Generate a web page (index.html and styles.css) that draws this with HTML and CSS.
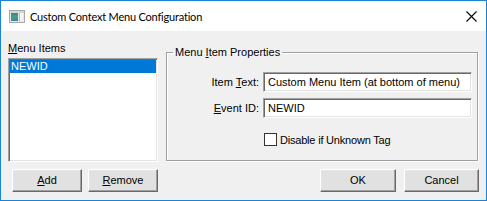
FILE: index.html
```html
<!DOCTYPE html>
<html>
<head>
<meta charset="utf-8">
<link rel="stylesheet" href="styles.css">
</head>
<body>
<div class="window">
  <div class="titlebar">
    <svg class="app-icon" width="16" height="13" viewBox="0 0 16 13">
      <rect x="0.5" y="0.5" width="15" height="12" fill="#e8e8e8" stroke="#a8a8a8"/>
      <rect x="1" y="1" width="14" height="2" fill="#d4d4d4"/>
      <defs>
        <linearGradient id="g" x1="0" y1="0" x2="0" y2="1">
          <stop offset="0" stop-color="#2c8c8c"/>
          <stop offset="0.5" stop-color="#4aa07a"/>
          <stop offset="1" stop-color="#3a7fb0"/>
        </linearGradient>
      </defs>
      <rect x="2" y="3" width="7" height="8" fill="url(#g)"/>
      <rect x="10" y="3" width="4" height="8" fill="#f4f4f4"/>
      <rect x="10" y="3" width="1" height="8" fill="#bcbcbc"/>
    </svg>
    <span class="title">Custom Context Menu Configuration</span>
    <svg class="close" width="11" height="11" viewBox="0 0 11 11">
      <path d="M0.5 0.5 L10.5 10.5 M10.5 0.5 L0.5 10.5" stroke="#000" stroke-width="1.1" fill="none"/>
    </svg>
  </div>
  <div class="body">
    <div class="main">
      <div class="left">
        <div class="label"><u>M</u>enu Items</div>
        <div class="listbox">
          <div class="list-item selected">NEWID</div>
        </div>
      </div>
      <fieldset class="group">
        <legend>Menu <u>I</u>tem Properties</legend>
        <div class="row">
          <span class="field-label">Item <u>T</u>ext:</span>
          <div class="textbox">Custom Menu Item (at bottom of menu)</div>
        </div>
        <div class="row">
          <span class="field-label"><u>E</u>vent ID:</span>
          <div class="textbox">NEWID</div>
        </div>
        <div class="check-row">
          <span class="checkbox"></span>
          <span class="check-label">Disable if Unknown Tag</span>
        </div>
      </fieldset>
    </div>
    <div class="buttons">
      <div class="btn-group">
        <div class="btn btn-add"><u>A</u>dd</div>
        <div class="btn btn-remove"><u>R</u>emove</div>
      </div>
      <div class="btn-group right">
        <div class="btn btn-ok">OK</div>
        <div class="btn btn-cancel">Cancel</div>
      </div>
    </div>
  </div>
</div>
</body>
</html>
```

FILE: styles.css
```css
html, body {
  margin: 0;
  padding: 0;
  background: #f0f0f0;
}

.window {
  width: 487px;
  height: 201px;
  box-sizing: border-box;
  border: 1px solid #1883d7;
  background: #f0f0f0;
  display: flex;
  flex-direction: column;
  font-family: "Liberation Sans", Arial, sans-serif;
  font-size: 11px;
  color: #000;
}

.titlebar {
  height: 30px;
  flex: none;
  background: #fff;
  display: flex;
  align-items: center;
  padding-left: 8px;
  padding-right: 9px;
}

.app-icon {
  flex: none;
  margin-top: 1px;
}

.title {
  font-family: Lato, "Noto Sans", sans-serif;
  font-size: 11px;
  letter-spacing: -0.2px;
  margin-left: 5px;
  flex: 1;
  color: #000;
}

.close {
  flex: none;
}

.body {
  flex: 1;
  display: flex;
  flex-direction: column;
}

.main {
  display: flex;
  padding: 11px 0 0 7px;
  height: 120px;
}

.left {
  width: 150px;
  display: flex;
  flex-direction: column;
}

.label {
  line-height: 13px;
  height: 13px;
}

u {
  text-decoration: underline;
  text-underline-offset: 1px;
}

.listbox {
  margin-top: 3px;
  height: 104px;
  box-sizing: border-box;
  background: #fff;
  border: 1px solid;
  border-color: #a0a0a0 #fff #fff #a0a0a0;
  box-shadow: inset 1px 1px 0 #696969, inset -1px -1px 0 #e3e3e3;
  padding: 1px;
}

.list-item {
  height: 13px;
  line-height: 13px;
  padding-left: 1px;
}

.list-item.selected {
  background: #0078d7;
  color: #fff;
}

.group {
  margin: 4px 0 0 8px;
  width: 312px;
  height: 115px;
  box-sizing: border-box;
  border: 1px solid #a0a0a0;
  box-shadow: inset 1px 1px 0 #fff, 1px 1px 0 #fff;
  padding: 0 5px 0 6px;
  min-width: 0;
}

.group legend {
  padding: 0 2px;
  line-height: 13px;
  font-size: 11px;
}

.row {
  display: flex;
  align-items: center;
  height: 20px;
}

.row:first-of-type {
  margin-top: 13px;
}

.row + .row {
  margin-top: 6px;
}

.field-label {
  width: 86px;
  text-align: right;
  margin-right: 4px;
  flex: none;
}

.textbox {
  width: 209px;
  height: 20px;
  box-sizing: border-box;
  background: #fff;
  border: 1px solid;
  border-color: #a0a0a0 #fff #fff #a0a0a0;
  box-shadow: inset 1px 1px 0 #696969, inset -1px -1px 0 #e3e3e3;
  padding: 0 4px;
  line-height: 18px;
  white-space: nowrap;
  overflow: hidden;
}

.check-row {
  display: flex;
  align-items: center;
  margin-top: 15px;
  padding-left: 91px;
}

.checkbox {
  width: 13px;
  height: 13px;
  box-sizing: border-box;
  border: 1px solid #333;
  background: #fff;
  flex: none;
}

.check-label {
  margin-left: 3px;
  letter-spacing: -0.2px;
}

.buttons {
  display: flex;
  justify-content: space-between;
  margin-top: 7px;
  padding: 0 7px 0 11px;
}

.btn-group {
  display: flex;
  gap: 6px;
}

.btn-group.right {
  gap: 8px;
}

.btn {
  height: 23px;
  box-sizing: border-box;
  background: #e1e1e1;
  border: 1px solid;
  border-color: #fff #696969 #696969 #fff;
  box-shadow: inset -1px -1px 0 #a0a0a0, inset 1px 1px 0 #e3e3e3;
  display: flex;
  align-items: center;
  justify-content: center;
  line-height: 13px;
}

.btn-add, .btn-remove {
  width: 70px;
}

.btn-ok {
  width: 76px;
}

.btn-cancel {
  width: 75px;
}
```
